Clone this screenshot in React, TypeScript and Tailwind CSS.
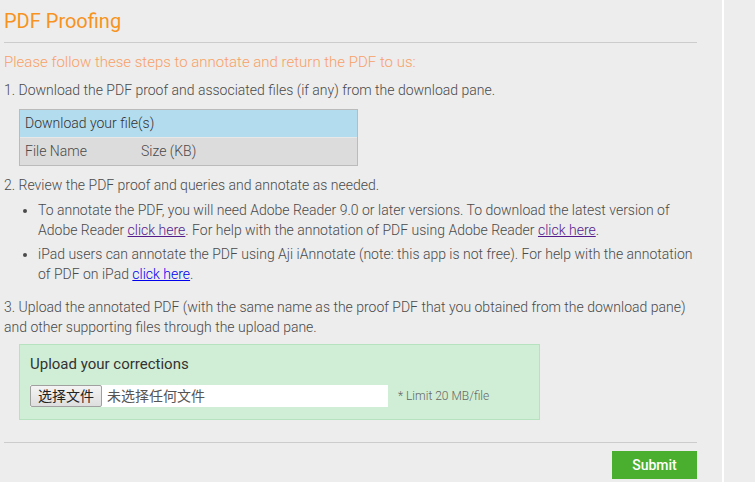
import React from "react";

export default function App() {
  return (
    <div className="min-h-screen w-full bg-[#ededed] flex" style={{ fontFamily: "Roboto, 'Noto Sans CJK SC', sans-serif" }}>
      <div className="w-[724px] border-r-2 border-white pl-[4px] pr-[25px] text-[14px] font-light text-[#4a4a4a]">
        {/* Heading */}
        <div className="h-[43px] border-b border-[#cccccc] flex items-center">
          <h1 className="text-[20px] leading-[24px] text-[#f7931e] font-normal -mt-[1px]">PDF Proofing</h1>
        </div>

        <p className="mt-[9px] leading-[20px] text-[15px] text-[#f9a066]">
          Please follow these steps to annotate and return the PDF to us:
        </p>

        <p className="mt-[8px] leading-[20px]">
          1. Download the PDF proof and associated files (if any) from the download pane.
        </p>

        {/* Download pane */}
        <div className="mt-[9px] ml-[15px] w-[339px] border border-[#bbbbbb]">
          <div className="h-[27px] bg-[#b3dcee] px-[5px] flex items-center text-[#333]">Download your file(s)</div>
          <div className="h-[28px] bg-[#dcdcdc] border-t border-[#e8e8e8] px-[5px] flex items-center">
            <span className="w-[116px]">File Name</span>
            <span>Size (KB)</span>
          </div>
        </div>

        <p className="mt-[9px] leading-[20px]">2. Review the PDF proof and queries and annotate as needed.</p>

        <ul className="list-disc pl-[34px] mt-[6px] leading-[19.5px]">
          <li>
            To annotate the PDF, you will need Adobe Reader 9.0 or later versions. To download the latest version of
            Adobe Reader <a className="text-[#551a8b] underline">click here</a>. For help with the annotation of PDF
            using Adobe Reader <a className="text-[#551a8b] underline">click here</a>.
          </li>
          <li className="mt-[5px]">
            iPad users can annotate the PDF using Aji iAnnotate (note: this app is not free). For help with the
            annotation of PDF on iPad <a className="text-[#0000ee] underline">click here</a>.
          </li>
        </ul>

        <p className="mt-[13px] leading-[20px]">
          3. Upload the annotated PDF (with the same name as the proof PDF that you obtained from the download pane)
          and other supporting files through the upload pane.
        </p>

        {/* Upload pane */}
        <div className="mt-[7px] ml-[15px] w-[521px] h-[76px] bg-[#d0eed5] border border-[#b7e2c0] pl-[10px] pt-[8px]">
          <div className="text-[15px] leading-[22px] text-[#333] font-normal">Upload your corrections</div>
          <div className="mt-[10px] flex items-center">
            <div className="flex items-center w-[358px] h-[22px] bg-white">
              <span className="h-[22px] px-[7px] flex items-center bg-gradient-to-b from-[#f4f4f4] to-[#dedede] border border-[#a0a0a0] rounded-[2px] text-[#222] font-normal">
                选择文件
              </span>
              <span className="ml-[5px] text-[#555] font-normal">未选择任何文件</span>
            </div>
            <span className="ml-[10px] text-[12px] text-[#666]">* Limit 20 MB/file</span>
          </div>
        </div>

        <div className="mt-[22px] border-t border-[#cccccc]" />

        <div className="mt-[8px] flex justify-end">
          <button className="w-[85px] h-[28px] bg-[#4aae2e] text-white text-[14px] font-medium">Submit</button>
        </div>
      </div>
      <div className="flex-1" />
    </div>
  );
}
